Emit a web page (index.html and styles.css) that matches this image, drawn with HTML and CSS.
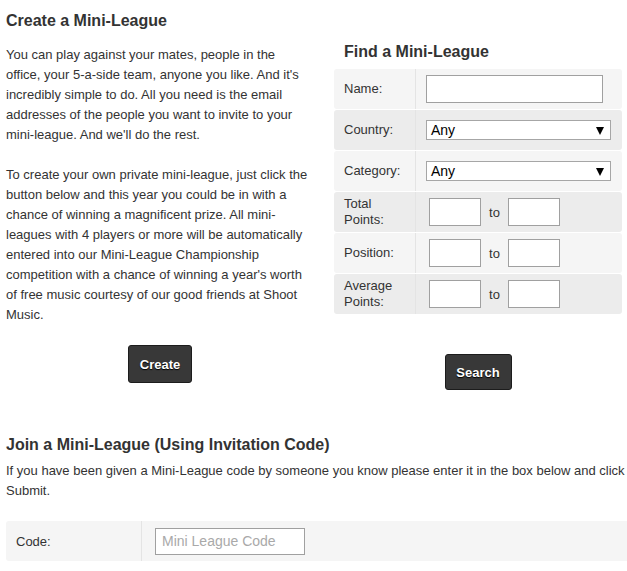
FILE: index.html
```html
<!DOCTYPE html>
<html>
<head>
<meta charset="utf-8">
<link rel="stylesheet" href="styles.css">
</head>
<body>
<div class="page">
  <div class="top">
    <div class="create">
      <h2 class="h-create">Create a Mini-League</h2>
      <p class="txt">You can play against your mates, people in the office, your 5-a-side team, anyone you like. And it's incredibly simple to do. All you need is the email addresses of the people you want to invite to your mini-league. And we'll do the rest.</p>
      <p class="txt">To create your own private mini-league, just click the button below and this year you could be in with a chance of winning a magnificent prize. All mini-leagues with 4 players or more will be automatically entered into our Mini-League Championship competition with a chance of winning a year's worth of free music courtesy of our good friends at Shoot Music.</p>
      <div class="btn-wrap btn-wrap-create"><button class="btn btn-create">Create</button></div>
    </div>
    <div class="find">
      <h2 class="h-find">Find a Mini-League</h2>
      <div class="ftable">
        <div class="frow light">
          <div class="flabel">Name:</div>
          <div class="fval"><input class="in-name" type="text"></div>
        </div>
        <div class="frow dark">
          <div class="flabel">Country:</div>
          <div class="fval"><span class="sel"><span class="sel-text">Any</span><span class="sel-arrow"></span></span></div>
        </div>
        <div class="frow light">
          <div class="flabel">Category:</div>
          <div class="fval"><span class="sel"><span class="sel-text">Any</span><span class="sel-arrow"></span></span></div>
        </div>
        <div class="frow dark">
          <div class="flabel">Total Points:</div>
          <div class="fval range"><input class="in-small" type="text"><span class="to">to</span><input class="in-small" type="text"></div>
        </div>
        <div class="frow light">
          <div class="flabel">Position:</div>
          <div class="fval range"><input class="in-small" type="text"><span class="to">to</span><input class="in-small" type="text"></div>
        </div>
        <div class="frow dark">
          <div class="flabel">Average Points:</div>
          <div class="fval range"><input class="in-small" type="text"><span class="to">to</span><input class="in-small" type="text"></div>
        </div>
      </div>
      <div class="btn-wrap btn-wrap-search"><button class="btn btn-search">Search</button></div>
    </div>
  </div>
  <div class="join">
    <h2 class="h-join">Join a Mini-League (Using Invitation Code)</h2>
    <p class="txt join-txt">If you have been given a Mini-League code by someone you know please enter it in the box below and click Submit.</p>
    <div class="crow">
      <div class="clabel">Code:</div>
      <div class="cval"><input class="in-code" type="text" placeholder="Mini League Code"></div>
    </div>
  </div>
</div>
</body>
</html>
```
FILE: styles.css
```css
* { box-sizing: border-box; }
html, body { margin: 0; padding: 0; background: #fff; }
body {
  font-family: "Liberation Sans", Arial, sans-serif;
  font-size: 13px;
  color: #333;
}
.page { padding: 0 0 0 6px; }
h2 {
  font-size: 16px;
  line-height: 20px;
  font-weight: bold;
  color: #333;
  margin: 0;
}
.txt { margin: 0; line-height: 20px; }
.top { display: flex; }
.create { width: 308px; }
.create .txt { padding-right: 4px; }
.h-create { margin-top: 11px; margin-bottom: 14px; }
.create .txt + .txt { margin-top: 20px; }
.btn-wrap { display: flex; justify-content: center; }
.btn-wrap-create { margin-top: 20px; }
.btn {
  font-family: "Liberation Sans", Arial, sans-serif;
  font-size: 13px;
  font-weight: bold;
  color: #fff;
  background: #383838;
  border: 1px solid #1c1c1c;
  border-radius: 3px;
  text-shadow: 0 1px 1px #000;
  padding: 0;
  cursor: pointer;
}
.btn-create { width: 64px; height: 38px; }
.btn-search { width: 67px; height: 36px; }
.find { margin-left: 20px; width: 288px; }
.h-find { margin-top: 42px; margin-bottom: 7px; padding-left: 10px; }
.ftable { display: flex; flex-direction: column; gap: 1px; }
.frow {
  display: grid;
  grid-template-columns: 82px 1fr;
  height: 40px;
  border-radius: 3px;
}
.frow.light { background: #f5f5f5; }
.frow.dark { background: #ececec; }
.flabel {
  display: flex;
  align-items: center;
  padding: 0 10px;
  line-height: 16px;
  border-right: 1px solid #e4e4e4;
}
.fval { display: flex; align-items: center; padding-left: 10px; }
.in-name {
  width: 177px;
  height: 28px;
  border: 1px solid #a0a0a0;
  background: #fff;
  margin: 0;
  padding: 0 4px;
}
.sel {
  position: relative;
  display: flex;
  align-items: center;
  width: 185px;
  height: 20px;
  border: 1px solid #a6a6a6;
  background: #fff;
  font-family: "Liberation Sans", Arial, sans-serif;
  font-size: 14px;
  color: #000;
}
.sel-text { padding-left: 4px; }
.sel-arrow {
  position: absolute;
  right: 6px;
  top: 6px;
  width: 0;
  height: 0;
  border-left: 4px solid transparent;
  border-right: 4px solid transparent;
  border-top: 8px solid #000;
}
.range { padding-left: 13px; }
.in-small {
  width: 52px;
  height: 28px;
  border: 1px solid #a0a0a0;
  background: #fff;
  margin: 0;
  padding: 0 4px;
}
.to { width: 27px; text-align: center; padding-right: 0; }
.btn-wrap-search { margin-top: 40px; }
.join { margin-top: 45px; }
.h-join { margin-bottom: 6px; }
.crow {
  display: grid;
  grid-template-columns: 136px 1fr;
  height: 40px;
  margin-top: 20px;
  background: #f5f5f5;
  border-radius: 3px 0 0 3px;
}
.clabel {
  display: flex;
  align-items: center;
  padding-left: 10px;
  border-right: 1px solid #e4e4e4;
}
.cval { display: flex; align-items: center; padding-left: 13px; }
.in-code {
  width: 150px;
  height: 27px;
  border: 1px solid #a0a0a0;
  background: #fff;
  margin: 0;
  padding: 0 6px;
  font-family: "Liberation Sans", Arial, sans-serif;
  font-size: 14px;
}
.in-code::placeholder { color: #a9a9a9; }
```
